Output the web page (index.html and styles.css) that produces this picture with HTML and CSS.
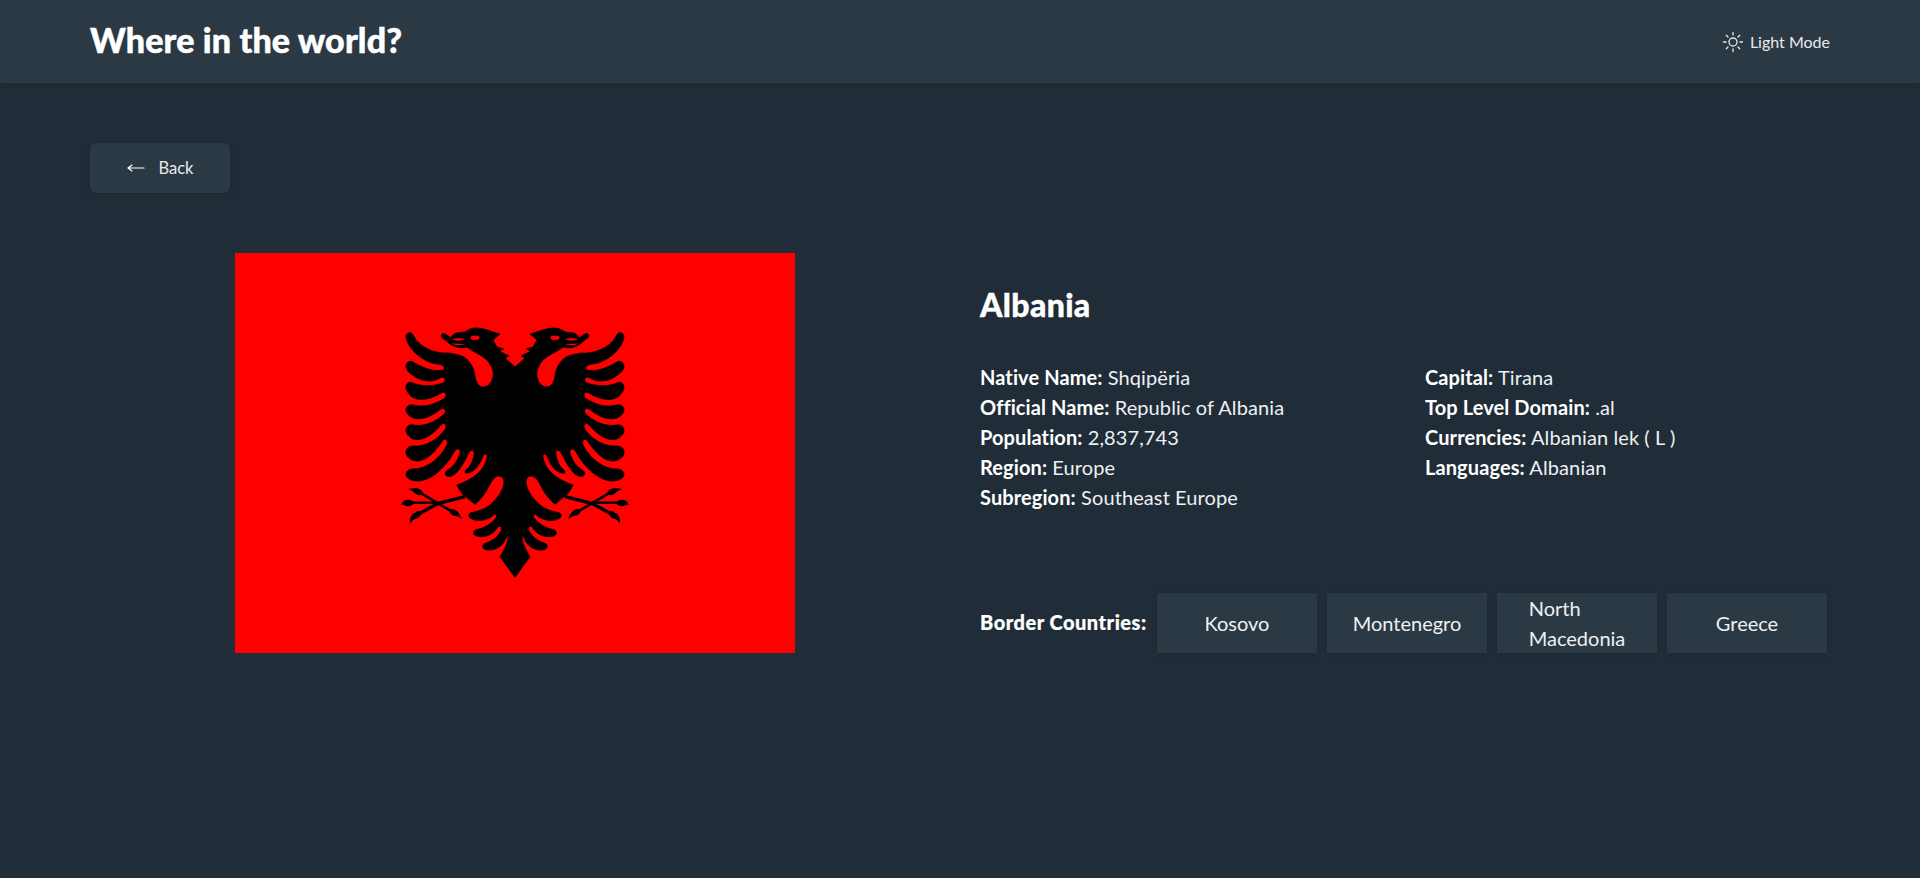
FILE: index.html
```html
<!DOCTYPE html>
<html lang="en">
<head>
<meta charset="utf-8">
<title>Where in the world?</title>
<link rel="stylesheet" href="styles.css">
</head>
<body>
<header class="topbar">
  <h1 class="brand">Where in the world?</h1>
  <button class="mode">
    <svg class="sun" viewBox="0 0 22 22" width="22" height="22" aria-hidden="true">
      <circle cx="11" cy="11" r="4" />
      <path d="M11 1.5V4M11 18v2.5M1.5 11H4M18 11h2.5M4.3 4.3 6 6M16 16l1.7 1.7M4.3 17.7 6 16M16 6l1.7-1.7" />
    </svg>
    <span>Light Mode</span>
  </button>
</header>
<main class="page">
  <button class="back">
    <svg class="arrow" viewBox="0 0 18 10" width="18" height="10" aria-hidden="true">
      <path d="M1 5H17M1 5 5 2M1 5 5 8" />
    </svg>
    <span>Back</span>
  </button>
  <section class="detail">
    <svg class="flag" viewBox="235 253 560 400" width="560" height="400" role="img" aria-label="Flag of Albania">
      <rect x="235" y="253" width="560" height="400" fill="#ff0000" />
      <g id="half">
        <path class="eagle" d="M516 368 L515 367 L505 358 L509 356 L499 351 L504 349 L497 347 L493 340 L500 334 C492 332 484 328 476 328 C471 328 468 330 465 332 L456 333 C453 334 452 336 451 338 C448 336 446 334 443.5 333.5 C441 333.5 440.5 337 443 338.5 C447 341 451 346 458 347.5 C462 348 466 347.5 467 347 C473 352 482 355 487 360 C492 366 494 372 493 376 C492 383 488 387 483 387 C479 387 476 383 475 376 C474 368 470 361 464 357 C460 355 455 354 449 353 C437 354 425 349 418 342 C415 339 414 336 412.5 334 C410.5 331.5 406.5 332.5 406 336.5 C407 346 417 358 432 363 L440 364.5 C445 365 446 370 441 370.5 C430 371.5 420 366 413 362 C409 360 406 363 406 366 C406 370 410 374 414 376 C419 380 425 381 430 381 C435 381 438 379 441 377.5 C445 376 447 381 443 383 C432 387 420 386 413 383 C409 381 406 384 406 387 C406 391 409 394 412 397 C420 402 432 399 442 392.5 C446 391 447 396 445 398 C436 404 424 408 413 405 C409 404 406 407 406 410 C406 413 409 416 413 418 C422 421 432 416 441 409 C445 407 447 411 444 414 C436 422 424 427 413 425 C409 424 406 427 406 430 C406 434 409 437 413 439 C424 442 434 433 442 424 C446 422 447 427 445 429.5 C438 439 426 447 413 446 C408 446 406 449 406 452 C406 457 410 460 416 461 C426 462 436 451 443 440 C447 438 448 442 447 445 C441 457 428 469 413 469 C408 469 406 472 406 475 C407 479 412 481 419 481 C432 480 446 467 454 452 C457 447 461 449 460 453 C458 460 454 466 449 469 C445 471 444 475 447 476 C452 478 457 473 461 467 C465 461 468 454 470 451 C473 449 475 452 474 455 C473 461 470 467 466 470 C464 472 465 474 468 473 C475 472 480 464 483 456 C484 453 488 454 487 457 C485 468 477 478 456.7 485 L461.7 493.3 L475 504.3 C480 500 484 495 487 490 C491 482 494 476 499 476 C503 476 504 480 504 483 C503 490 498 497 494 501 C488 508 480 511 472 512.5 C468 513 468 517 471 518.5 C476 522 488 521 494 514.5 C496 513 497 516 496 518 C492 523 485 528 477 529.5 C473 530 473 534 475 535.5 C481 538 492 537 498 527 C500 525 502 527 501.5 530 C499 535 493 541 486 543 C482 544 482 547 484 549 C490 552 502 549 506 538 C507 535 508.5 536 507.5 541 C506 547 503 552 500 556.7 L515 577.3 L516 576 Z" />
        <ellipse cx="475" cy="337.7" rx="4.5" ry="2.2" fill="#ff0000" />
        <path d="M452 339.5 C456 337.5 462 338 465 339.5 C460 341 456 341 452 339.5Z" fill="#ff0000" />
        <path d="M451.5 343.5 C456 345.5 461 345.5 465.5 344 C461 343.8 456 343.5 451.5 343.5Z" fill="#ff0000" />
        <g class="talon">
          <path d="M418.3 491.7 454 512.7" stroke-width="2.6" />
          <path d="M465 496.7 438.3 503.3 416.7 515" stroke-width="3.4" />
          <path d="M438.3 502.7H408.3" stroke-width="2.4" />
          <ellipse cx="418" cy="491.7" rx="5" ry="3" transform="rotate(25 418 491.7)" />
          <ellipse cx="408" cy="503" rx="5.5" ry="3.2" />
          <ellipse cx="417" cy="515" rx="5" ry="3" transform="rotate(-40 417 515)" />
          <ellipse cx="454" cy="512.5" rx="5" ry="3" transform="rotate(30 454 512.5)" />
          <path d="M418 489C414 488 411 488 407.7 489.3C411 489.5 413 492 418 494Z" />
          <path d="M408 500C405 500 403 503 400 505C403 504.5 405 505.5 408 505.5Z" />
          <path d="M414 513C411 515 409.5 519 410 524C411 521 414 519 418 517Z" />
          <path d="M452 510C457 511 461 514 461.7 519.3C460 517 456 515.5 452 515Z" />
        </g>
      </g>
      <use href="#half" transform="matrix(-1 0 0 1 1030 0)" />
    </svg>
    <div class="info">
      <h2 class="country">Albania</h2>
      <div class="facts">
        <ul class="list">
          <li><b>Native Name:</b> Shqipëria</li>
          <li><b>Official Name:</b> Republic of Albania</li>
          <li><b>Population:</b> 2,837,743</li>
          <li><b>Region:</b> Europe</li>
          <li><b>Subregion:</b> Southeast Europe</li>
        </ul>
        <ul class="list">
          <li><b>Capital:</b> Tirana</li>
          <li><b>Top Level Domain:</b> .al</li>
          <li><b>Currencies:</b> Albanian lek ( L )</li>
          <li><b>Languages:</b> Albanian</li>
        </ul>
      </div>
      <div class="borders">
        <span class="borders-label">Border Countries:</span>
        <a class="chip"><span>Kosovo</span></a>
        <a class="chip"><span>Montenegro</span></a>
        <a class="chip"><span>North Macedonia</span></a>
        <a class="chip"><span>Greece</span></a>
      </div>
    </div>
  </section>
</main>
</body>
</html>
```

FILE: styles.css
```css
* { box-sizing: border-box; }
html, body { margin: 0; height: 100%; }
body {
  background: #202c37;
  color: #fff;
  font-family: "Lato", "Noto Sans", sans-serif;
  font-size: 20px;
  line-height: 30px;
  overflow: hidden;
}
.topbar {
  height: 83px;
  padding: 0 90px;
  background: #2b3945;
  display: flex;
  align-items: center;
  justify-content: space-between;
  box-shadow: 0 2px 4px rgba(0, 0, 0, .06);
}
.brand {
  margin: 0 0 3px;
  font-size: 34px;
  font-weight: 900;
  line-height: 40px;
  letter-spacing: .15px;
  -webkit-text-stroke: .5px #fff;
}
.mode {
  display: flex;
  align-items: center;
  gap: 6px;
  padding: 0;
  border: 0;
  background: none;
  color: #e8eaec;
  font: 400 16px/22px "Lato", sans-serif;
}
.sun { fill: none; stroke: #e8eaec; stroke-width: 1.3; stroke-linecap: round; }
.page { padding: 60px 90px 0; }
.back {
  width: 140px;
  height: 50px;
  display: flex;
  align-items: center;
  justify-content: center;
  gap: 14px;
  border: 0;
  border-radius: 6px;
  background: #2b3945;
  color: #e8eaec;
  font: 400 16.5px/22px "Lato", sans-serif;
  box-shadow: 0 2px 6px rgba(0, 0, 0, .08);
}
.arrow { fill: none; stroke: #fff; stroke-width: 1.2; stroke-linecap: round; }
.detail {
  margin-top: 60px;
  padding-left: 145px;
  display: flex;
  gap: 185px;
}
.flag { flex: none; display: block; }
.eagle { fill: #000; stroke: #000; stroke-width: .8; stroke-linejoin: round; }
.talon { fill: #000; stroke: #000; stroke-width: 0; }
.talon path[stroke-width] { fill: none; }
.info {
  width: 850px;
  height: 400px;
  padding-top: 32px;
  display: flex;
  flex-direction: column;
}
.country {
  margin: 0 0 37px;
  font-size: 32px;
  font-weight: 900;
  line-height: 40px;
  letter-spacing: .35px;
  -webkit-text-stroke: .4px #fff;
}
.facts { display: grid; grid-template-columns: 445px 1fr; }
.list { margin: 0; padding: 0; list-style: none; font-weight: 400; color: #eef0f2; letter-spacing: .1px; }
.list b { font-weight: 700; color: #fff; letter-spacing: .1px; }
.borders {
  margin-top: auto;
  display: flex;
  align-items: center;
  gap: 10px;
}
.borders-label { font-weight: 900; width: 167px; letter-spacing: .5px; padding-bottom: 2px; -webkit-text-stroke: .2px #fff; }
.chip {
  width: 160px;
  height: 60px;
  padding: 0 33px;
  display: flex;
  align-items: center;
  justify-content: center;
  background: #2b3945;
  color: #eef0f2;
  font-weight: 400;
  box-shadow: 0 1px 4px rgba(0, 0, 0, .06);
}
```
